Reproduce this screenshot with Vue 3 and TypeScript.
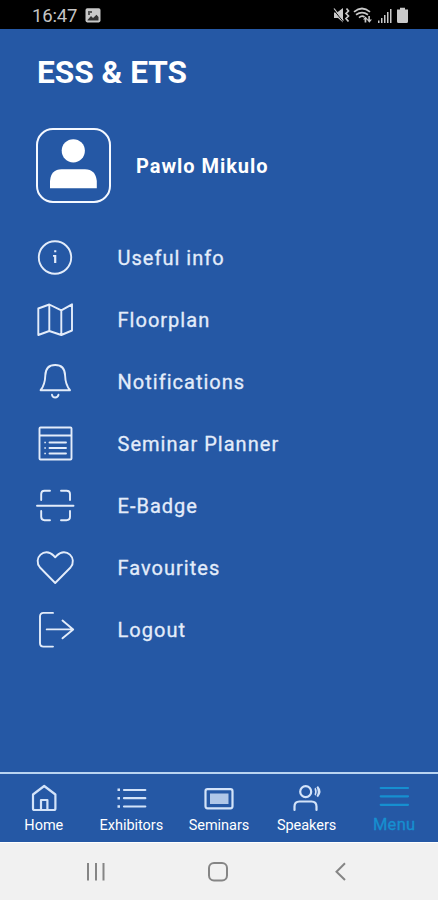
<script setup lang="ts">
type Shape = { d: string; fill?: boolean }
interface MenuItem { label: string; shapes: Shape[] }
interface Tab { label: string; cls: string; shapes: Shape[] }

const items: MenuItem[] = [
  { label: 'Useful info', shapes: [
    { d: 'M3.8 19.5a16.2 16.2 0 1 0 32.4 0a16.2 16.2 0 1 0-32.4 0' },
    { d: 'M19.2 12.2h2.1v2.1h-2.1zM18 17h3.3v8h-2.200v-6.300h-1.100z', fill: true } ] },
  { label: 'Floorplan', shapes: [
    { d: 'M3.3 8.5L14.3 4.5L26.3 10.3L37 4.3V30.5L26.3 35L14.3 31L3.3 35ZM14.3 4.5V31M26.3 10.3V35' } ] },
  { label: 'Notifications', shapes: [
    { d: 'M5.6 28.2C9 24 10.1 20 10.3 13.5C10.5 6.5 14.5 3 20.2 3C25.9 3 29.9 6.5 30.1 13.5C30.3 20 31.5 24 35 28.2Z' },
    { d: 'M17 32.8Q17.5 35.5 20.2 35.5Q22.9 35.5 23.5 32.8' } ] },
  { label: 'Seminar Planner', shapes: [
    { d: 'M5.5 3.500H35.5Q36.5 3.5 36.5 4.5V34.5Q36.5 35.5 35.5 35.5H5.5Q4.5 35.5 4.5 34.5V4.5Q4.5 3.5 5.5 3.5ZM4.5 11.500H36.500M14.5 18.500H31M14.5 24H31M14.5 29.500H31' },
    { d: 'M9.3 17.7h1.6v1.6h-1.6zM9.3 23.2h1.6v1.6h-1.6zM9.3 28.7h1.6v1.6h-1.6z', fill: true } ] },
  { label: 'E-Badge', shapes: [
    { d: 'M2 19.7H38.5M15 4.7H9.5Q6.2 4.7 6.2 8V14M26 4.7H31.5Q35 4.7 35 8V14M6.2 25V30.8Q6.2 34.2 9.5 34.2H15M35 25V30.8Q35 34.2 31.5 34.2H26' } ] },
  { label: 'Favourites', shapes: [
    { d: 'M20.2 35L5 19.5C-2.5 10.5 9.5-1.8 18.5 7.5L20.2 9.3L21.9 7.5C31-1.8 43 10.5 35.5 19.5Z' } ] },
  { label: 'Logout', shapes: [
    { d: 'M18 2.9H8.5Q5 2.9 5 6.5V33Q5 36.6 8.5 36.6H18M11.7 19.4H38M27.5 10.5L38.2 19.4L27.5 28.3' } ] },
]

const tabs: Tab[] = [
  { label: 'Home', cls: 'home', shapes: [
    { d: 'M5 10.5L16.2 2L27.4 10.5V24.5Q27.4 26 25.9 26H6.5Q5 26 5 24.5ZM13 26V16H19.4V26' } ] },
  { label: 'Exhibitors', cls: 'exhibitors', shapes: [
    { d: 'M9 6H30.3M9 14.2H30.3M9 22.5H30.3' },
    { d: 'M2.5 4.6h2.5v2.5h-2.5zM2.5 13h2.5v2.5h-2.5zM2.5 21.3h2.5v2.5h-2.5z', fill: true } ] },
  { label: 'Seminars', cls: 'seminars', shapes: [
    { d: 'M4.5 5.2H27.5Q29.5 5.2 29.5 7.2V22.3Q29.5 24.3 27.5 24.3H4.5Q2.5 24.3 2.5 22.3V7.2Q2.5 5.2 4.5 5.2Z' },
    { d: 'M7 9.5H25.5V20H7Z', fill: true } ] },
  { label: 'Speakers', cls: 'speakers', shapes: [
    { d: 'M9.2 7.7a5.5 5.5 0 1 0 11 0a5.5 5.5 0 1 0-11 0M3.5 26V22.5Q3.5 17.5 8.5 17.5H20.5Q25.5 17.5 25.5 22.5V26' },
    { d: 'M24.5 3.5Q26.9 7.6 24.5 11.7L23.5 10.5Q24.5 7.6 23.5 4.7ZM27 2Q32 7.6 27 13.2L25.5 12Q28 7.6 25.5 3.2Z', fill: true } ] },
  { label: 'Menu', cls: 'menu', shapes: [
    { d: 'M2.7 4H30M2.7 12.300H30M2.7 20.800H30' } ] },
]
</script>

<template>
  <div class="phone">
    <header class="status">
      <span class="time">16:47</span>
      <svg class="photo" width="16" height="16" viewBox="0 0 16 16">
        <rect x="0.5" y="0.2" width="15" height="14.2" rx="1.8" fill="#c8c8c8" />
        <path d="M2.5 12L6 8L8 10L11.5 6.8L13.5 9V12.5H2.5Z" fill="#333" />
        <path d="M3 3h4v2H5v2H3z" fill="#555" />
      </svg>
      <svg class="signals" width="78" height="18" viewBox="0 0 78 18">
        <g fill="#c9c9c9">
          <path d="M2 5.5H5L11 1V15.500L6 11H2Z" />
          <path d="M46 13.500h1.500v2.500h-1.500zM49 11h1.500v5h-1.500zM52 8h1.500v8h-1.500zM55 5h1.500v11h-1.500zM58 2h1.500v14h-1.500z" />
          <path d="M65 2.500H68V.8H73V2.500H76V14.500Q76 16 74.500 16H66.500Q65 16 65 14.500Z" />
          <path d="M31 12.500L33.500 9.500L36 12.500H34.300V15.500H32.600V12.500ZM34.800 12.500H36.300V9H37.900V12.500H40L37.300 15.800Z" />
        </g>
        <path d="M1 2L11.500 15" stroke="#000" stroke-width="1" />
        <path d="M2 1.500L11.500 13.500" stroke="#c9c9c9" stroke-width="1.2" />
        <path d="M14.500 1.500L16.500 4L14 6.500L16.500 9L14 11.500L16.500 14.500M22 4.800Q30 -1.800 38 4.800M24 7.800Q30 3.500 36 7.800M27 10.600Q30 8 32.500 10" stroke="#c9c9c9" stroke-width="1.700" fill="none" />
      </svg>
    </header>

    <main class="content">
      <h1 class="title">ESS &amp; ETS</h1>
      <section class="profile">
        <div class="avatar">
          <svg width="70" height="70" viewBox="0 0 70 70" fill="#fff">
            <circle cx="35.3" cy="20.8" r="11.6" />
            <path d="M12 58.2V51Q13 39.200 23.500 39.200H47Q57.500 39.200 58.800 51V58.200Z" />
          </svg>
        </div>
        <span class="name">Pawlo Mikulo</span>
      </section>
      <nav class="list">
        <a v-for="item in items" :key="item.label" class="row">
          <svg class="row-icon" viewBox="0 0 40 40">
            <path v-for="(s, i) in item.shapes" :key="i" :d="s.d" :class="s.fill ? 'solid' : 'line'" />
          </svg>
          <span class="row-label">{{ item.label }}</span>
        </a>
      </nav>
    </main>

    <nav class="tabs">
      <a v-for="tab in tabs" :key="tab.label" class="tab" :class="tab.cls">
        <svg class="tab-icon" viewBox="0 0 32 30">
          <path v-for="(s, i) in tab.shapes" :key="i" :d="s.d" :class="s.fill ? 'solid' : 'line'" />
        </svg>
        <span class="tab-label">{{ tab.label }}</span>
      </a>
    </nav>

    <footer class="system">
      <svg width="438" height="58" viewBox="0 0 438 58" fill="none" stroke="#858585" stroke-width="2">
        <path d="M88 21V38.500M96 21V38.500M103.500 21V38.500" />
        <rect x="209" y="21" width="18" height="17.5" rx="5" />
        <path d="M345 21.300L336.500 29.700L345 38" />
      </svg>
    </footer>
  </div>
</template>

<style>
body {
  margin: 0;
}
</style>

<style scoped>
.phone {
  display: flex;
  flex-direction: column;
  width: 438px;
  height: 900px;
  overflow: hidden;
  background: #2558a5;
  color: #e3ecfa;
  font-family: Roboto, "Liberation Sans", sans-serif;
}
.status {
  display: flex;
  align-items: flex-start;
  box-sizing: border-box;
  height: 29px;
  flex: none;
  padding: 7px 28px 0 32px;
  background: #000;
}
.time {
  width: 53px;
  color: #c4c4c4;
  font-size: 18.5px;
  line-height: 19px;
  letter-spacing: -0.15px;
}
.photo {
  margin-top: 1px;
}
.signals {
  margin-left: auto;
}
.content {
  flex: 1;
}
.title {
  margin: 0;
  padding: 24px 0 0 37px;
  color: #fff;
  font-size: 31.6px;
  line-height: 40px;
  font-weight: 700;
}
.profile {
  display: flex;
  align-items: center;
  padding: 35px 0 0 36px;
}
.avatar {
  width: 71px;
  height: 71px;
  border: 2px solid #f4f8ff;
  border-radius: 17px;
}
.avatar svg {
  display: block;
}
.name {
  margin-left: 25px;
  padding-top: 1px;
  color: #fff;
  font-size: 20px;
  font-weight: 700;
  letter-spacing: 0.95px;
}
.list {
  padding: 24px 0 0 35px;
}
.row {
  display: flex;
  align-items: center;
  height: 62px;
}
.row-icon {
  width: 40px;
  height: 40px;
}
.row-label {
  margin-left: 42.5px;
  font-size: 20px;
  line-height: 24px;
  letter-spacing: 1.02px;
  -webkit-text-stroke: 0.3px currentColor;
}
.line {
  fill: none;
  stroke: currentColor;
  stroke-width: 1.9;
  stroke-linejoin: round;
  stroke-linecap: round;
}
.solid {
  fill: currentColor;
}
.tabs {
  display: flex;
  flex: none;
  box-sizing: border-box;
  height: 70px;
  border-top: 2px solid #b9d4f2;
}
.tab {
  flex: 1;
  display: flex;
  flex-direction: column;
  align-items: center;
  padding-top: 10px;
}
.tab-icon {
  width: 32px;
  height: 30px;
  color: #d3e3f9;
}
.tab-icon .line {
  stroke-width: 2.2;
}
.seminars .solid {
  opacity: 0.8;
}
.tab-label {
  margin-top: 3px;
  color: #fff;
  font-size: 14.5px;
  line-height: 18px;
  letter-spacing: -0.03px;
}
.menu .tab-icon,
.menu .tab-label {
  color: #168fd0;
}
.menu .tab-label {
  margin-top: 2px;
  font-size: 16.5px;
  letter-spacing: 0.3px;
  -webkit-text-stroke: 0.3px currentColor;
}
.system {
  flex: none;
  box-sizing: border-box;
  height: 58px;
  background: #f1f1f1;
  box-shadow: inset 0 1px #fff;
}
.system svg {
  display: block;
}
</style>
